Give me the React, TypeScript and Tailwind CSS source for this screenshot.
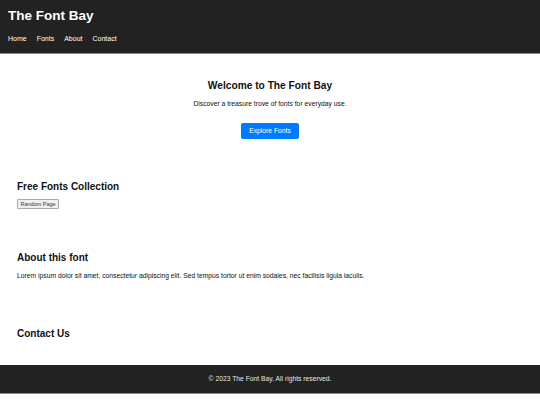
export default function App() {
  return (
    <div className="font-['Liberation_Sans',Arial,sans-serif] text-[#111] bg-white">
      <header className="bg-[#222222] text-white px-[8px] pt-[7px] h-[54px] border-b border-[#8a8a8a]">
        <h1 className="text-[13.5px] font-bold leading-[17px]">The Font Bay</h1>
        <nav className="mt-[10px] flex gap-[10px] text-[7px] leading-[9px]">
          <a>Home</a>
          <a>Fonts</a>
          <a>About</a>
          <a>Contact</a>
        </nav>
      </header>

      <section className="flex flex-col items-center pt-[26px] pb-[41px]">
        <h2 className="text-[10.2px] font-bold leading-[12px]">Welcome to The Font Bay</h2>
        <p className="mt-[7px] text-[6.75px] leading-[9px]">Discover a treasure trove of fonts for everyday use.</p>
        <button className="mt-[15px] h-[16px] w-[58px] rounded-[2px] bg-[#007bff] text-[6.75px] text-white">
          Explore Fonts
        </button>
      </section>

      <section className="px-[17px] pt-[1px] h-[72px]">
        <h2 className="text-[10px] font-bold leading-[12px]">Free Fonts Collection</h2>
        <button className="block mt-[6px] h-[10px] w-[42px] rounded-[1px] border border-[#aaa] bg-[#efefef] text-[5.5px] leading-[8px] text-[#333]">
          Random Page
        </button>
      </section>

      <section className="px-[17px] h-[76px]">
        <h2 className="text-[10px] font-bold leading-[12px]">About this font</h2>
        <p className="mt-[7px] text-[6.75px] leading-[9px]">
          Lorem ipsum dolor sit amet, consectetur adipiscing elit. Sed tempus tortor ut enim sodales, nec facilisis ligula iaculis.
        </p>
      </section>

      <section className="px-[17px] h-[37px]">
        <h2 className="text-[10px] font-bold leading-[12px]">Contact Us</h2>
      </section>

      <footer className="bg-[#222222] text-[#e6e6e6] h-[29px] border-b border-[#8a8a8a] flex items-center justify-center text-[6.75px]">
        © 2023 The Font Bay. All rights reserved.
      </footer>
    </div>
  );
}
